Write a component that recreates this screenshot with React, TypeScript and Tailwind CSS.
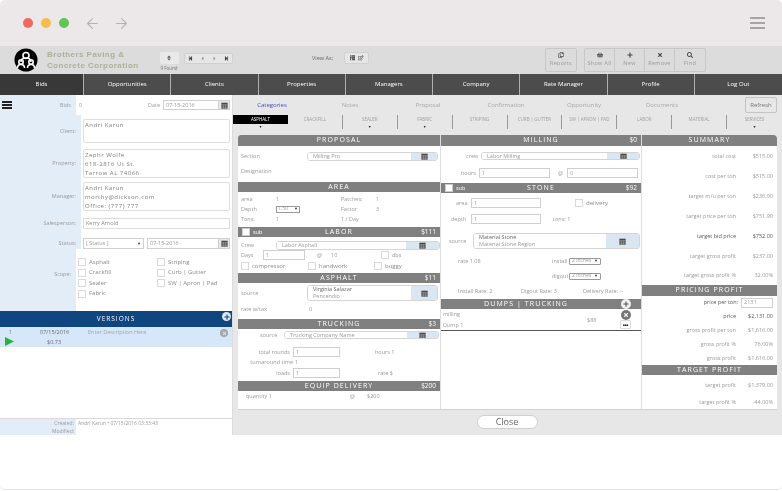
import React from "react";
import { ArrowLeft, ArrowRight } from "lucide-react";
import { FaStepBackward, FaStepForward, FaCaretLeft, FaCaretRight, FaRegCopy, FaShoppingBasket, FaPlus, FaTimes, FaSearch, FaThList, FaRegEdit, FaSort } from "react-icons/fa";

const Cal = () => (
  <svg width="7" height="7" viewBox="0 0 10 10" className="shrink-0">
    <rect x="0.5" y="1" width="9" height="8.5" fill="#4a4a4a" />
    <path d="M0.5 3.6H9.5M0.5 5.6H9.5M0.5 7.6H9.5M3.5 3.6V9.5M6.5 3.6V9.5" stroke="#cfcfcf" strokeWidth="0.5" />
  </svg>
);

const Bar = ({ title, right, sub, cls }: { title: string; right?: string; sub?: boolean; cls: string }) => (
  <div className={`relative flex items-center justify-center bg-[#808080] text-white text-[7px] font-medium tracking-[1.1px] shrink-0 ${cls}`}>
    {sub && (
      <div className="absolute left-[4px] top-[1px] flex items-center gap-[3px] text-[5.5px] font-normal tracking-normal">
        <span className="w-[8px] h-[8px] bg-white border border-[#ccc]" />
        <span>sub</span>
      </div>
    )}
    <span>{title}</span>
    {right && <span className="absolute right-[4px] top-0 leading-[10px] tracking-normal text-[6.5px]">{right}</span>}
  </div>
);

const T = ({ children, cls = "" }: { children: React.ReactNode; cls?: string }) => (
  <span className={`text-[5.5px] text-[#999] whitespace-nowrap ${cls}`}>{children}</span>
);

const Picker = ({ w, btn, cls, lines }: { w: string; btn: string; cls: string; lines: string[] }) => (
  <div className={`flex border border-[#d4d4d4] rounded-[3px] overflow-hidden ${cls}`}>
    <div className={`flex flex-col justify-center pl-[5px] text-[5.5px] leading-[7px] text-[#999] bg-white ${w}`}>
      {lines.map((l, i) => <span key={l} className={i === 0 && lines.length > 1 ? "text-[#666]" : ""}>{l}</span>)}
    </div>
    <div className={`flex items-center justify-center bg-[#dbe6f3] ${btn}`}><Cal /></div>
  </div>
);

const Box = ({ cls, v = "1" }: { cls: string; v?: string }) => (
  <div className={`border border-[#cfcfcf] bg-white h-[10px] flex items-center pl-[2px] text-[5.5px] text-[#999] ${cls}`}>{v}</div>
);

const Check = ({ label, cls = "" }: { label: string; cls?: string }) => (
  <div className={`flex items-center gap-[3px] ${cls}`}>
    <span className="w-[8px] h-[8px] border border-[#d9d9d9] bg-white shrink-0" />
    <span className="text-[6px] text-[#8a8a8a] whitespace-nowrap">{label}</span>
  </div>
);

const Sel = ({ cls = "" }: { cls?: string }) => (
  <div className={`h-[7px] border border-[#999] rounded-[1px] flex items-center justify-between px-[2px] text-[5px] text-[#999] ${cls}`}>
    <span>2 inches</span><span className="text-[#333] text-[4px]">▼</span>
  </div>
);

const SideRow = ({ label, pt, children, h }: { label: string; pt: string; h: string; children: React.ReactNode }) => (
  <div className="flex">
    <div className={`w-[76px] shrink-0 bg-[#e3edf8] flex items-center justify-end pr-[5px] text-[5.5px] text-[#999] ${pt} ${h} box-content`}>{label}</div>
    <div className={`flex-1 pl-[2px] pr-[2px] ${pt}`}><div className={h}>{children}</div></div>
  </div>
);

const Field = ({ lines, cls = "" }: { lines: string[]; cls?: string }) => (
  <div className={`h-full border border-[#dedede] rounded-[2px] px-[1px] pt-[1px] text-[6px] leading-[8.8px] tracking-[0.5px] text-[#7d7d7d] ${cls}`}>
    {lines.map(l => <div key={l}>{l}</div>)}
  </div>
);

const Sum = ({ l, v, dark, h }: { l: string; v: string; dark?: boolean; h: string }) => (
  <div className={`flex items-center justify-end pr-[4px] ${h}`}>
    <span className={`text-[5.5px] whitespace-nowrap ${dark ? "text-[#555]" : "text-[#999]"}`}>{l}</span>
    <span className={`w-[37px] text-right text-[5.5px] whitespace-nowrap ${dark ? "text-[#555]" : "text-[#999]"}`}>{v}</span>
  </div>
);

const Tool = ({ icon, label, cls = "" }: { icon: React.ReactNode; label: string; cls?: string }) => (
  <div className={`w-[30px] h-[23px] flex flex-col items-center justify-center gap-[1px] text-[5.5px] tracking-[0.3px] text-[#999] ${cls}`}>
    <span className="text-[#444] text-[6px]">{icon}</span>{label}
  </div>
);

const nav = ["Bids", "Opportunities", "Clients", "Properties", "Managers", "Company", "Rate Manager", "Profile", "Log Out"];
const tabs = ["Categories", "Notes", "Proposal", "Confirmation", "Opportunity", "Documents"];
const subs = ["ASPHALT", "CRACKFILL", "SEALER", "FABRIC", "STRIPING", "CURB | GUTTER", "SW | APRON | PAD", "LABOR", "MATERIAL", "SERVICES"];
const arrows = ["ASPHALT", "SEALER", "FABRIC", "SERVICES"];

export default function App() {
  return (
    <div className="w-[782px] h-[491px] overflow-hidden bg-white flex flex-col blur-[0.3px] font-['Open_Sans','Liberation_Sans',sans-serif]">
      {/* window chrome */}
      <div className="h-[46px] shrink-0 bg-[#ece8e9] flex items-center pl-[23px] pr-[17px] rounded-t-[5px]">
        <span className="w-[10px] h-[10px] rounded-full bg-[#ee6a5f]" />
        <span className="w-[10px] h-[10px] rounded-full bg-[#f5bd4f] ml-[8px]" />
        <span className="w-[10px] h-[10px] rounded-full bg-[#61c454] ml-[8px]" />
        <ArrowLeft size={17} strokeWidth={1.5} className="text-[#b4b1b1] ml-[15px]" />
        <ArrowRight size={17} strokeWidth={1.5} className="text-[#b4b1b1] ml-[12px]" />
        <div className="ml-auto flex flex-col gap-[3.5px]">
          <span className="block w-[15px] h-[1.5px] bg-[#a6a4a4]" />
          <span className="block w-[15px] h-[1.5px] bg-[#a6a4a4]" />
          <span className="block w-[15px] h-[1.5px] bg-[#a6a4a4]" />
        </div>
      </div>

      {/* toolbar */}
      <div className="h-[28px] shrink-0 bg-[#dcdcdc] flex items-center pl-[14px]">
        <svg width="24" height="24" viewBox="0 0 24 24" className="shrink-0">
          <circle cx="12" cy="12" r="11.5" fill="#000" />
          <g fill="none" stroke="#fff" strokeWidth="1.6">
            <circle cx="12" cy="7.5" r="3" />
            <path d="M7 14c0-3 2-4 5-4s5 1 5 4" />
            <circle cx="7" cy="14" r="2.2" />
            <circle cx="17" cy="14" r="2.2" />
            <path d="M3.5 20c0-2.5 1.3-3.5 3.5-3.5s3.5 1 3.5 3.5M13.5 20c0-2.5 1.3-3.5 3.5-3.5s3.5 1 3.5 3.5" />
          </g>
        </svg>
        <div className="ml-[9px] w-[98px] shrink-0 font-['Liberation_Sans',sans-serif] font-bold text-[8px] leading-[11px] tracking-[0.45px] text-[#aeb096] whitespace-nowrap">
          <div>Brothers Paving &amp;</div>
          <div>Concrete Corporation</div>
        </div>
        <div className="ml-[14px] w-[20px] flex flex-col items-center">
          <div className="w-[19px] h-[12px] mt-[3px] bg-[#e9e9e9] rounded-[2px] flex items-center justify-center text-[6px] text-[#555]"><FaSort /></div>
          <span className="text-[4.5px] text-[#777] mt-[1px] leading-[6px] whitespace-nowrap">9 Found</span>
        </div>
        <div className="ml-[5px] -mt-[4px] w-[49px] h-[11px] bg-[#e6e6e6] border border-[#d0d0d0] rounded-[2px] grid grid-cols-4 items-center justify-items-center text-[5px] text-[#444]">
          <FaStepBackward /><FaCaretLeft className="text-[#888]" /><FaCaretRight className="text-[#888]" /><FaStepForward />
        </div>
        <span className="ml-[79px] -mt-[4px] w-[32px] text-[5.5px] text-[#666] whitespace-nowrap">View As:</span>
        <div className="-mt-[4px] w-[25px] h-[12px] bg-[#e6e6e6] border border-[#d0d0d0] rounded-[2px] flex items-center justify-center gap-[3px] text-[5.5px] text-[#555]">
          <FaThList /><FaRegEdit />
        </div>
        <div className="ml-[176px] border border-[#c8c8c8] rounded-[2px] h-[24px] flex items-center">
          <Tool icon={<FaRegCopy />} label="Reports" />
        </div>
        <div className="ml-[7px] border border-[#c8c8c8] rounded-[2px] h-[24px] flex items-center divide-x divide-[#c8c8c8]">
          <Tool icon={<FaShoppingBasket />} label="Show All" />
          <Tool icon={<FaPlus />} label="New" />
          <Tool icon={<FaTimes />} label="Remove" />
          <Tool icon={<FaSearch />} label="Find" />
        </div>
      </div>

      {/* nav */}
      <div className="h-[21px] shrink-0 grid grid-cols-[84px_repeat(8,1fr)] bg-[#4c4c4c] text-white text-[6px] font-medium">
        {nav.map((n, i) => (
          <div key={n} className={`flex items-center justify-center border-r border-[#b0b0b0] last:border-r-0 ${i === 0 ? "bg-[#383838]" : ""}`}>{n}</div>
        ))}
      </div>

      {/* main */}
      <div className="h-[340px] shrink-0 flex">
        {/* sidebar */}
        <div className="w-[233px] shrink-0 flex flex-col bg-white border-r border-[#dcdcdc]">
          <div className="h-[216px] shrink-0 flex flex-col bg-white overflow-hidden">
            <div className="flex h-[20px] shrink-0">
              <div className="w-[76px] bg-[#e3edf8] flex items-center justify-between pl-[2px] pr-[5px]">
                <div className="flex flex-col gap-[1.5px]">
                  <span className="block w-[10px] h-[1.5px] bg-[#222]" />
                  <span className="block w-[10px] h-[1.5px] bg-[#222]" />
                  <span className="block w-[10px] h-[1.5px] bg-[#222]" />
                </div>
                <span className="text-[5.5px] text-[#999]">Bids</span>
              </div>
              <div className="flex-1 flex items-center pl-[3px] pr-[2px]">
                <T>0</T>
                <T cls="ml-auto mr-[3px]">Date</T>
                <div className="w-[67px] h-[10px] border border-[#cfcfcf] flex">
                  <span className="flex-1 pl-[2px] text-[5.5px] leading-[8px] text-[#999]">07-15-2016</span>
                  <span className="w-[11px] bg-[#e8e8e8] border-l border-[#cfcfcf] flex items-center justify-center"><Cal /></span>
                </div>
              </div>
            </div>
            <SideRow label="Client:" pt="pt-[4px]" h="h-[24px]"><Field lines={["Andri Karun"]} /></SideRow>
            <SideRow label="Property:" pt="pt-[6px]" h="h-[29px]"><Field lines={["Zephr Wolfe", "618-2816 Ut St.", "Tarrow AL 74066"]} /></SideRow>
            <SideRow label="Manager:" pt="pt-[4px]" h="h-[29px]"><Field lines={["Andri Karun", "morthy@dickson.com", "Office: (777) 777"]} /></SideRow>
            <SideRow label="Salesperson:" pt="pt-[7px]" h="h-[11px]">
              <div className="h-full border border-[#dedede] pl-[2px] text-[5.5px] leading-[9px] text-[#8a8a8a]">Kerry Arnold</div>
            </SideRow>
            <SideRow label="Status:" pt="pt-[9px]" h="h-[11px]">
              <div className="h-full flex gap-[3px]">
                <div className="w-[61px] border border-[#cfcfcf] flex items-center justify-between px-[2px] text-[5.5px] text-[#999]"><span>[ Status ]</span><span className="text-[#333] text-[4px]">▼</span></div>
                <div className="flex-1 border border-[#cfcfcf] flex">
                  <span className="flex-1 pl-[2px] text-[5.5px] leading-[9px] text-[#999]">07-15-2016</span>
                  <span className="w-[11px] bg-[#e8e8e8] border-l border-[#cfcfcf] flex items-center justify-center"><Cal /></span>
                </div>
              </div>
            </SideRow>
            <div className="flex flex-1">
              <div className="w-[76px] shrink-0 bg-[#e3edf8] flex items-start justify-end pr-[5px] pt-[21px] text-[5.5px] text-[#999]">Scope:</div>
              <div className="flex-1 grid grid-cols-[79px_1fr] grid-rows-[10.5px_10.5px_10.5px_10.5px] pl-[2px] pt-[8px] content-start">
                <Check label="Asphalt" /><Check label="Striping" />
                <Check label="Crackfill" /><Check label="Curb | Gutter" />
                <Check label="Sealer" /><Check label="SW | Apron | Pad" />
                <Check label="Fabric" />
              </div>
            </div>
          </div>
          <div className="relative h-[16px] shrink-0 bg-[#0f4680] flex items-center justify-center text-white text-[6.5px] font-medium tracking-[1px]">
            VERSIONS
            <span className="absolute right-[1px] top-[1px] w-[9px] h-[9px] rounded-full bg-[#dfe6ee] flex items-center justify-center text-[#0f4680] text-[6px]"><FaPlus /></span>
          </div>
          <div className="relative h-[20px] shrink-0 bg-[#d5e7f9] flex text-[5.5px] text-[#777]">
            <div className="w-[33px] shrink-0 pl-[9px] pt-[1px] flex flex-col justify-between">
              <span>1</span>
              <svg width="9" height="9" viewBox="0 0 9 9" className="-ml-[4px] mb-[1px]"><path d="M0 0L9 4.5L0 9Z" fill="#27b53f" /></svg>
            </div>
            <div className="w-[55px] shrink-0 flex flex-col items-start justify-between py-[1px] text-[#6a6a6a]">
              <span className="ml-[7px]">07/15/2016</span>
              <span className="ml-[14px]">$0.73</span>
            </div>
            <span className="pt-[1px] text-[#a5a5a5]">Enter Description Here</span>
            <span className="absolute right-[4px] top-[2px] w-[8px] h-[8px] rounded-full bg-[#a5a5a5] flex items-center justify-center text-[#d5e7f9] text-[5px]"><FaTimes /></span>
          </div>
          <div className="flex-1 bg-white" />
          <div className="h-[17px] shrink-0 border-t border-[#d9d9d9] flex text-[5px] text-[#999]">
            <div className="w-[76px] bg-[#e3edf8] flex flex-col items-end justify-center gap-[2px] pr-[2px] leading-[6px]"><span>Created:</span><span>Modified:</span></div>
            <span className="pl-[2px] pt-[1px]">Andri Karun • 07/15/2016 03:33:43</span>
          </div>
        </div>

        {/* right */}
        <div className="flex-1 flex flex-col bg-[#e7e7e7] min-w-0">
          <div className="relative h-[20px] shrink-0 flex items-center text-[6px] text-[#a8a8a8]">
            {tabs.map((t, i) => <div key={t} className={`w-[78px] text-center ${i === 0 ? "text-[#4a4ac0]" : ""}`}>{t}</div>)}
            <div className="absolute right-[5px] top-[2px] w-[32px] h-[16px] border border-[#c4c4c4] rounded-[2px] flex items-center justify-center text-[#777]">Refresh</div>
          </div>
          <div className="h-[15px] shrink-0 grid grid-cols-10 text-[4.5px] text-[#a0a0a0]">
            {subs.map((s, i) => (
              <div key={s} className="flex flex-col items-center border-r border-[#999] last:border-r-0 first:border-r-0 h-[14px]">
                <span className={`w-full text-center leading-[9px] h-[9px] whitespace-nowrap ${i === 0 ? "bg-black text-white" : ""}`}>{s}</span>
                {arrows.includes(s) && <span className="text-[#222] text-[3.5px] leading-[6px]">▼</span>}
              </div>
            ))}
          </div>
          <div className="mt-[5px] ml-[5px] mr-[5px] h-[275px] shrink-0 bg-white flex rounded-t-[3px] overflow-hidden border-b border-[#d0d0d0]">
            {/* col 1 */}
            <div className="w-[203px] shrink-0 flex flex-col border-r border-[#ddd]">
              <Bar title="PROPOSAL" cls="h-[11px]" />
              <div className="h-[20px] flex items-center pl-[3px]"><T>Section</T><Picker cls="ml-auto h-[9px]" w="w-[103px]" btn="w-[26px]" lines={["Milling Pro"]} /><span className="w-[2px]" /></div>
              <div className="h-[10px] flex items-center pl-[3px] mb-[6px]"><T>Designation</T></div>
              <Bar title="AREA" cls="h-[10px]" />
              <div className="mt-[2px] h-[10px] flex items-center pl-[3px]"><T cls="w-[35px]">area</T><T cls="w-[65px]">1</T><T cls="w-[35px]">Patches:</T><T>1</T></div>
              <div className="h-[10px] flex items-center pl-[3px]"><T cls="w-[35px]">Depth</T><span className="w-[24px] h-[7px] border border-[#999] flex items-center justify-between px-[1px] text-[5px] text-[#999]">1.50 <span className="text-[#333] text-[4px]">▼</span></span><span className="w-[41px]" /><T cls="w-[35px]">Factor</T><T>3</T></div>
              <div className="h-[10px] flex items-center pl-[3px]"><T cls="w-[35px]">Tons:</T><T cls="w-[65px]">1</T><T>1 / Day</T></div>
              <Bar title="LABOR" right="$111" sub cls="h-[10px] mt-[3px]" />
              <div className="mt-[3px] h-[10px] flex items-center pl-[3px]"><T cls="w-[35px]">Crew</T><Picker cls="h-[9px]" w="w-[129px]" btn="w-[33px]" lines={["Labor Asphalt"]} /></div>
              <div className="h-[10px] flex items-center pl-[3px]"><T cls="w-[22px]">Days</T><Box cls="w-[42px]" /><T cls="ml-[12px] w-[14px]">@</T><T cls="w-[50px]">10</T><span className="w-[8px] h-[8px] border border-[#d9d9d9] mr-[3px]" /><T>dbs</T></div>
              <div className="h-[12px] flex items-center pl-[3px] mb-[1px]"><Check label="compressor" cls="w-[67px]" /><Check label="handwork" cls="w-[66px]" /><Check label="buggy" /></div>
              <Bar title="ASPHALT" right="$11" cls="h-[10px]" />
              <div className="mt-[2px] h-[16px] flex items-center pl-[3px]"><T>source</T><Picker cls="ml-auto h-[16px]" w="w-[103px]" btn="w-[26px]" lines={["Virginia Salazar", "Pencendio"]} /><span className="w-[2px]" /></div>
              <div className="mt-[3px] h-[10px] flex items-center pl-[3px]"><T cls="w-[68px]">rate w/tax</T><T>0</T></div>
              <Bar title="TRUCKING" right="$3" cls="h-[10px] mt-[5px]" />
              <div className="mt-[1px] h-[10px] flex items-center pl-[22px]"><T cls="w-[24px]">source</T><Picker cls="h-[8px]" w="w-[122px]" btn="w-[31px]" lines={["Trucking Company Name"]} /></div>
              <div className="mt-[7px] h-[10px] flex items-center"><T cls="w-[53px] text-right pr-[1px]">total rounds</T><Box cls="w-[47px] ml-[2px]" /><T cls="ml-[35px]">hours 1</T></div>
              <div className="h-[10px] flex items-center"><T cls="w-[55px] text-right">turnaround time</T><T cls="ml-[2px]">1</T></div>
              <div className="mt-[1px] h-[10px] flex items-center"><T cls="w-[53px] text-right pr-[1px]">loads</T><Box cls="w-[47px] ml-[2px]" /><T cls="ml-[38px]">rate $</T></div>
              <Bar title="EQUIP DELIVERY" right="$200" cls="h-[10px] mt-[3px]" />
              <div className="h-[10px] flex items-center pl-[8px]"><T cls="w-[104px]">quantity 1</T><T cls="w-[17px]">@</T><T>$200</T></div>
            </div>
            {/* col 2 */}
            <div className="w-[201px] shrink-0 flex flex-col border-r border-[#ddd]">
              <Bar title="MILLING" right="$0" cls="h-[11px]" />
              <div className="h-[20px] flex items-center pl-[25px]"><T cls="w-[15px]">crew</T><Picker cls="h-[8px]" w="w-[125px]" btn="w-[32px]" lines={["Labor Milling"]} /></div>
              <div className="h-[14px] flex items-center pl-[20px]"><T cls="w-[18px]">hours</T><Box cls="w-[71px]" /><T cls="ml-[8px] w-[9px]">@</T><Box cls="w-[71px]" v="0" /></div>
              <Bar title="STONE" right="$92" sub cls="h-[10px] mt-[3px]" />
              <div className="mt-[5px] h-[10px] flex items-center pl-[15px]"><T cls="w-[15px]">area</T><Box cls="w-[70px]" /><span className="w-[34px]" /><Check label="delivery" /></div>
              <div className="mt-[6px] h-[10px] flex items-center pl-[10px]"><T cls="w-[20px]">depth</T><Box cls="w-[70px]" /><T cls="ml-[12px]">tons: 1</T></div>
              <div className="mt-[9px] h-[16px] flex items-center pl-[8px]"><T cls="w-[24px]">source</T><Picker cls="h-[16px]" w="w-[132px]" btn="w-[33px]" lines={["Material Stone", "Material Stone Region"]} /></div>
              <div className="mt-[6px] h-[12px] flex items-center pl-[17px]"><T cls="w-[94px]">rate 1.08</T><T cls="w-[17px]">install</T><Sel cls="w-[32px]" /></div>
              <div className="mt-[3px] h-[12px] flex items-center pl-[111px]"><T cls="w-[17px]">digout</T><Sel cls="w-[32px]" /></div>
              <div className="mt-[4px] h-[10px] flex items-center pl-[17px]"><T cls="w-[63px]">Install Rate: 2</T><T cls="w-[62px]">Digout Rate: 3</T><T>Delivery Rate: --</T></div>
              <Bar title="DUMPS | TRUCKING" cls="h-[10px] mt-[3px] pr-[30px]" />
              <div className="relative h-[22px] flex flex-col justify-center gap-[3px] pl-[2px] border-b border-[#555]">
                <T>milling</T><T>Dump 1</T>
                <T cls="absolute left-[146px] top-[7px]">$88</T>
                <div className="absolute left-[179px] -top-[10px] flex flex-col items-center">
                  <span className="w-[10px] h-[10px] rounded-full bg-[#f1f1f1] flex items-center justify-center text-[#555] text-[6px]"><FaPlus /></span>
                  <span className="w-[10px] h-[10px] rounded-full bg-[#777] mt-[1px] flex items-center justify-center text-white text-[6px]"><FaTimes /></span>
                  <span className="w-[11px] h-[9px] bg-white border border-[#ddd] rounded-[1px] flex items-center justify-center text-[#222] text-[6px] leading-none tracking-[-0.5px] font-bold">•••</span>
                </div>
              </div>
            </div>
            {/* col 3 */}
            <div className="flex-1 flex flex-col">
              <Bar title="SUMMARY" cls="h-[11px] rounded-tr-[3px]" />
              <Sum h="h-[20px]" l="total cost" v="$515.00" />
              <Sum h="h-[20px]" l="cost per ton" v="$515.00" />
              <Sum h="h-[20px]" l="target m/u per ton" v="$236.90" />
              <Sum h="h-[20px]" l="target price per ton" v="$751.90" />
              <Sum h="h-[20px]" l="target bid price" v="$752.00" dark />
              <Sum h="h-[20px]" l="target gross profit" v="$237.00" />
              <Sum h="h-[19px]" l="target gross profit %" v="32.00%" />
              <Bar title="PRICING PROFIT" cls="h-[11px]" />
              <div className="h-[13px] flex items-center justify-end pr-[4px]">
                <span className="text-[5.5px] text-[#555] mr-[3px]">price per ton:</span>
                <Box cls="w-[32px]" v="2131" />
              </div>
              <Sum h="h-[14px]" l="price" v="$2,131.00" dark />
              <Sum h="h-[14px]" l="gross profit per ton" v="$1,616.00" />
              <Sum h="h-[14px]" l="gross profit %" v="76.00%" />
              <Sum h="h-[14px]" l="gross profit" v="$1,616.00" />
              <Bar title="TARGET PROFIT" cls="h-[10px]" />
              <Sum h="h-[20px]" l="target profit" v="$1,379.00" />
              <Sum h="h-[14px]" l="target profit %" v="-44.00%" />
            </div>
          </div>
          <div className="flex-1 flex items-center justify-center">
            <div className="w-[61px] h-[14px] -mt-[1px] ml-[-1px] bg-white border border-[#d0d0d0] rounded-full flex items-center justify-center text-[9px] text-[#666]">Close</div>
          </div>
        </div>
      </div>

      <div className="flex-1 bg-white border-b border-[#e2e2e2] rounded-b-[5px] mb-[1px]" />
    </div>
  );
}
